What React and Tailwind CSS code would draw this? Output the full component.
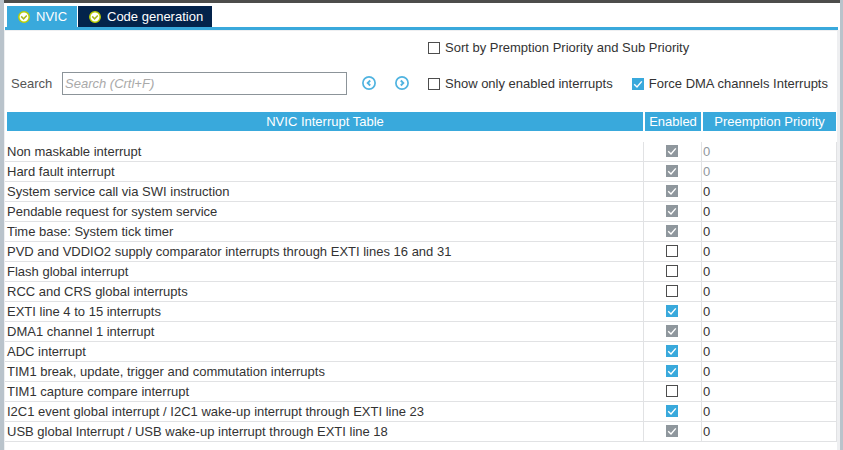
import React from "react";

const INTERRUPTS = [
  { name: "Non maskable interrupt", checked: true, locked: true, muted: true },
  { name: "Hard fault interrupt", checked: true, locked: true, muted: true },
  { name: "System service call via SWI instruction", checked: true, locked: true },
  { name: "Pendable request for system service", checked: true, locked: true },
  { name: "Time base: System tick timer", checked: true, locked: true },
  { name: "PVD and VDDIO2 supply comparator interrupts through EXTI lines 16 and 31" },
  { name: "Flash global interrupt" },
  { name: "RCC and CRS global interrupts" },
  { name: "EXTI line 4 to 15 interrupts", checked: true },
  { name: "DMA1 channel 1 interrupt", checked: true, locked: true },
  { name: "ADC interrupt", checked: true },
  { name: "TIM1 break, update, trigger and commutation interrupts", checked: true },
  { name: "TIM1 capture compare interrupt" },
  { name: "I2C1 event global interrupt / I2C1 wake-up interrupt through EXTI line 23", checked: true },
  { name: "USB global Interrupt / USB wake-up interrupt through EXTI line 18", checked: true, locked: true },
];

function CheckBox({ label, ...props }) {
  return (
    <span className="grid size-3 shrink-0">
      <input
        type="checkbox"
        aria-label={label}
        className="peer col-start-1 row-start-1 size-3 appearance-none border border-[#4d4d4d] bg-white checked:border-[#39a9dc] checked:bg-[#39a9dc] disabled:border-[#8f979d] disabled:bg-[#8f979d]"
        {...props}
      />
      <svg
        viewBox="0 0 12 12"
        className="pointer-events-none invisible col-start-1 row-start-1 size-3 peer-checked:visible"
        fill="none"
        stroke="#ffffff"
        strokeWidth="1.4"
      >
        <path d="M2.2 6.2 L5 9 L9.8 3.4" />
      </svg>
    </span>
  );
}

function Option({ children, checked }) {
  return (
    <label className="flex items-center gap-[5px] whitespace-nowrap">
      <CheckBox defaultChecked={checked} />
      {children}
    </label>
  );
}

function TabIcon() {
  return (
    <svg viewBox="0 0 12 12" className="size-3 shrink-0">
      <circle cx="6" cy="6" r="5.2" fill="#ffffff" stroke="#bccf00" strokeWidth="1.5" />
      <path d="M3.2 5.4 L5.6 7.8 L8.8 4.4" fill="none" stroke="#a9b81c" strokeWidth="1.5" />
    </svg>
  );
}

function ArrowButton({ label, d }) {
  return (
    <button type="button" aria-label={label} className="size-[14px] shrink-0">
      <svg viewBox="0 0 14 14" className="size-[14px]" fill="none" stroke="#4fb3e0">
        <circle cx="7" cy="7" r="6.1" strokeWidth="1.7" />
        <path d={d} strokeWidth="1.9" />
      </svg>
    </button>
  );
}

export default function App() {
  return (
    <div className="flex min-h-screen flex-col border-l-4 border-r-[3px] border-[#b9c3cb] bg-white font-['Liberation_Sans',Arial,sans-serif] text-[13px] leading-4 text-[#333333]">
      <div className="h-[3px] bg-[#4d4d4b]" />
      <div className="pr-0.5 pl-px">
        <div role="tablist" className="flex gap-px border-b-[3px] border-[#39a9dc] pt-[3px] pl-0.5 text-white">
          <button type="button" role="tab" aria-selected="true" className="flex h-[21px] w-[70px] items-center gap-1.5 bg-[#39a9dc] pl-[11px]">
            <TabIcon />
            NVIC
          </button>
          <button type="button" role="tab" aria-selected="false" className="flex h-[21px] w-[134px] items-center gap-1.5 bg-[#03234b] pl-[11px] whitespace-nowrap">
            <TabIcon />
            Code generation
          </button>
        </div>
      </div>

      <div className="flex-1 border-l border-r-[3px] border-[#eeeff1]">
        <div className="grid grid-cols-[341px_1fr] gap-x-[76px] border-t border-[#eeeff1] pr-[9px] pl-1.5">
          <div className="col-start-2 flex h-[34px] items-center">
            <Option>Sort by Premption Priority and Sub Priority</Option>
          </div>
          <div className="col-span-2 flex h-[47px] items-start pt-[7px]">
            <label htmlFor="search" className="mt-1 w-[51px] text-[#555555]">
              Search
            </label>
            <input
              id="search"
              type="text"
              placeholder="Search (Crtl+F)"
              className="h-[23px] w-[285px] border border-[#8c9499] px-0.5 italic outline-none placeholder:text-[#a9a9a9]"
            />
            <div className="ml-[15px] flex h-[22px] items-center gap-[19px]">
              <ArrowButton label="Previous" d="M8.2 4.5 L5.7 7 L8.2 9.5" />
              <ArrowButton label="Next" d="M5.8 4.5 L8.3 7 L5.8 9.5" />
            </div>
            <div className="ml-[19px] flex h-6 flex-1 items-center justify-between">
              <Option>Show only enabled interrupts</Option>
              <Option checked>Force DMA channels Interrupts</Option>
            </div>
          </div>
        </div>

        <table className="w-full table-fixed border-separate border-spacing-0">
          <colgroup>
            <col />
            <col className="w-[58px]" />
            <col className="w-[135px]" />
          </colgroup>
          <thead className="text-white">
            <tr className="h-[19px]">
              <th className="border-r border-l-2 border-white bg-[#39a9dc] p-0 font-normal">NVIC Interrupt Table</th>
              <th className="border-x border-white bg-[#39a9dc] p-0 font-normal">Enabled</th>
              <th className="border-x border-white bg-[#39a9dc] p-0 font-normal">Preemption Priority</th>
            </tr>
            <tr className="h-[11px]">
              <td colSpan={3} className="p-0" />
            </tr>
          </thead>
          <tbody>
            {INTERRUPTS.map((row) => (
              <tr key={row.name} className="h-5">
                <td className="border-r border-b border-[#e1e2e4] p-0 pl-0.5 whitespace-nowrap">{row.name}</td>
                <td className="border-r border-b border-[#e1e2e4] p-0 pr-px pb-px">
                  <div className="flex justify-center">
                    <CheckBox label={row.name} defaultChecked={row.checked} disabled={row.locked} />
                  </div>
                </td>
                <td className={`border-r border-b border-[#e1e2e4] p-0 pl-px ${row.muted ? "text-[#8f979d]" : ""}`}>0</td>
              </tr>
            ))}
          </tbody>
        </table>
      </div>
    </div>
  );
}
